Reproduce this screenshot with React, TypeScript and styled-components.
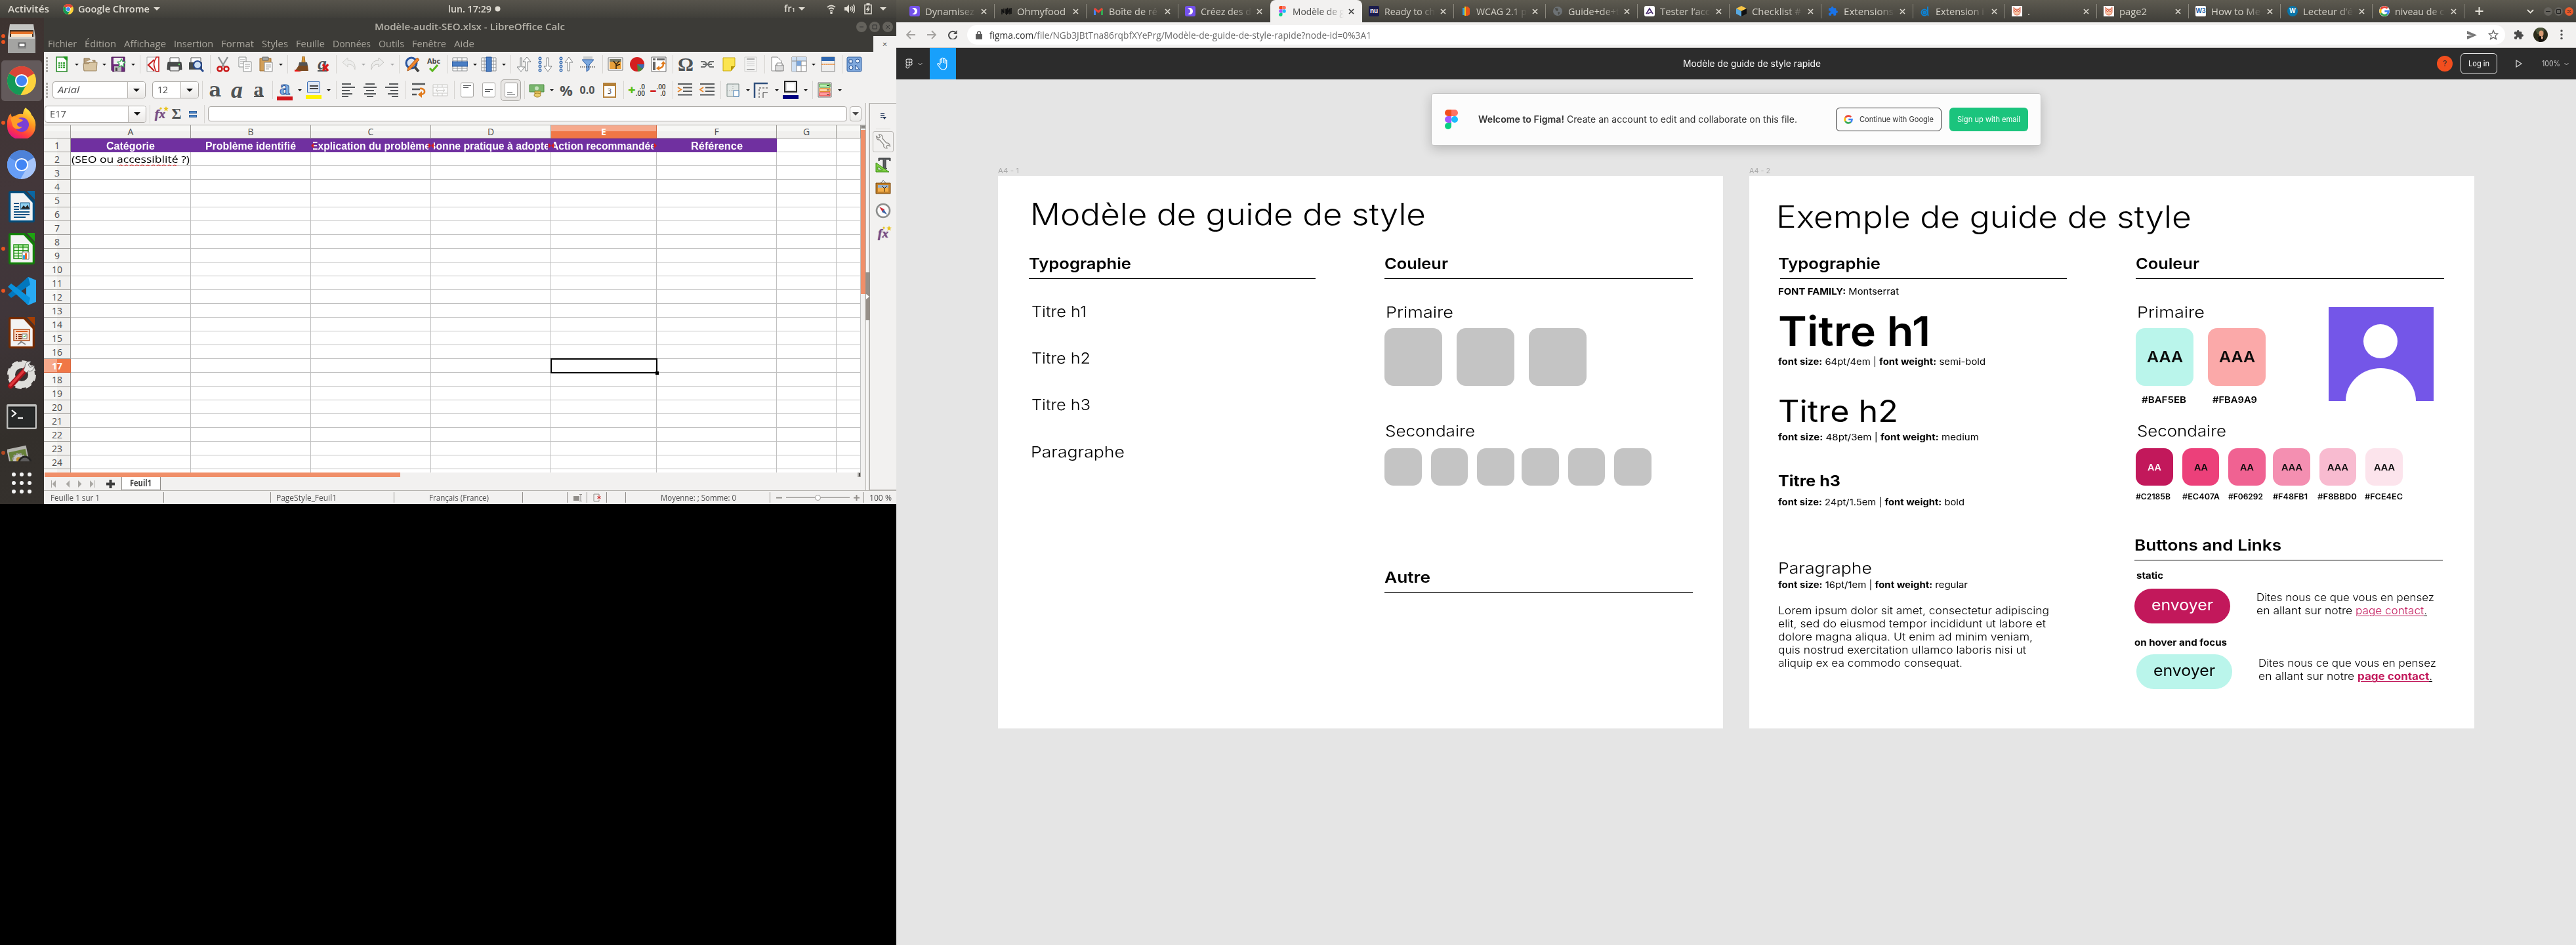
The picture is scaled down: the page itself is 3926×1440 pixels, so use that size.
import React, { useLayoutEffect, useRef, useState } from "react";
import styled, { createGlobalStyle, css } from "styled-components";

const ui = `"Open Sans", "Noto Sans", sans-serif`;
const geo = `Inter, "Open Sans", sans-serif`;

const Global = createGlobalStyle`
  *{box-sizing:border-box}
  html,body{margin:0;padding:0;background:#000}
  svg{display:block;flex:none}
`;

/* ---------- text fitted to a given measure ---------- */
const FitBox = styled.span<{ $w: number }>`
  display: inline-block; width: ${p => p.$w}px; white-space: nowrap; flex: none; vertical-align: top; text-align: left;
`;
const FitInner = styled.span`display: inline-block; transform-origin: 0 50%; white-space: pre;`;
function Fit({ w, children }: { w: number; children: React.ReactNode }) {
  const ref = useRef<HTMLSpanElement>(null);
  const [s, setS] = useState(1);
  useLayoutEffect(() => {
    const el = ref.current;
    if (el && el.offsetWidth) setS(w / el.getBoundingClientRect().width * s);
  }, [w]);
  return <FitBox $w={w}><FitInner ref={ref} style={{ transform: `scaleX(${s})` }}>{children}</FitInner></FitBox>;
}

const Screen = styled.div`display: flex; width: 3926px; height: 1440px; overflow: hidden; background: #000;`;

/* ================= left monitor ================= */
const Left = styled.div`width: 1366px; height: 768px; display: flex; flex-direction: column; flex: none; font-family: ${ui};`;
const TopBar = styled.div`
  height: 27px; display: flex; align-items: center; background: linear-gradient(#57544c, #403f3a);
  color: #dfdbd2; font-size: 14.5px; font-weight: 600; line-height: 27px; padding-left: 12px;
`;
const Gap = styled.div<{ $w: number }>`width: ${p => p.$w}px; flex: none;`;
const Grow = styled.div`flex: 1;`;
const Down = styled.i<{ $s?: number; $c?: string }>`
  width: 0; height: 0; flex: none; border: ${p => p.$s ?? 5}px solid transparent; border-bottom: 0; border-top-color: ${p => p.$c ?? "#dfdbd2"};
`;
const Body = styled.div`flex: 1; display: flex; min-height: 0;`;
const Dock = styled.div`
  width: 67px; flex: none; display: flex; flex-direction: column; overflow: hidden;
  background: linear-gradient(165deg, #3d3330 0%, #43373a 35%, #40363a 60%, #332f2b 85%, #35312d 100%);
`;
const DockSlot = styled.div<{ $h?: number }>`height: ${p => p.$h ?? 64}px; flex: none; display: flex; align-items: center; overflow: hidden;`;
const Dots = styled.div`width: 9px; padding-left: 2px; display: flex; flex-direction: column; gap: 3px; flex: none;`;
const RunDot = styled.i<{ $dim?: boolean }>`width: 6px; height: 6px; border-radius: 3px; background: #e95420; opacity: ${p => (p.$dim ? 0.7 : 1)};`;
const Tile = styled.div<{ $on?: boolean }>`
  width: 62px; height: 62px; margin-left: -7px; border-radius: 5px; display: flex; align-items: center; justify-content: center;
  background: ${p => (p.$on ? "#635a5b" : "transparent")};
`;

const Win = styled.div`flex: 1; display: flex; flex-direction: column; background: #f2f1f0; min-width: 0; color: #4c4c4c;`;
const TitleBar = styled.div`
  height: 28px; background: #3c3b37; display: flex; align-items: center; color: #b6b3aa; font-size: 14.5px; font-weight: 600; line-height: 28px; padding-left: 504px;
`;
const WBtn = styled.div<{ $hot?: boolean; $s?: number }>`
  width: ${p => p.$s ?? 16}px; height: ${p => p.$s ?? 16}px; border-radius: 50%; flex: none;
  background: ${p => (p.$hot ? "#ea5a2b" : "#64625c")}; display: flex; align-items: center; justify-content: center;
`;
const MenuBar = styled.div`
  height: 24px; background: #3c3b37; display: flex; align-items: center; gap: 12px; padding-left: 6px; color: #a9a69d; font-size: 14.5px; line-height: 24px;
`;
const CloseDoc = styled.div`
  width: 35px; height: 24px; margin-left: auto; background: #f2f1f0; color: #555; display: flex; align-items: center; justify-content: center; font-size: 13px;
`;
const ToolRow = styled.div<{ $h: number }>`height: ${p => p.$h}px; flex: none; display: flex; align-items: center;`;
const Item = styled.div<{ $ml: number; $w: number }>`
  margin-left: ${p => p.$ml}px; width: ${p => p.$w}px; flex: none; display: flex; align-items: center; justify-content: center;
`;
const SepLine = styled.i`width: 1px; height: 28px; background: #d6d4d1;`;
const Handle = styled.i`width: 3px; height: 23px; background: repeating-linear-gradient(#aaa8a4 0 3px, transparent 3px 5px);`;
const Combo = styled.div`
  width: 100%; height: 26px; border: 1px solid #a9a6a2; border-radius: 4px; display: flex; align-items: stretch; overflow: hidden;
  background: #fff; color: #4c4c4c; font-size: 14px; line-height: 24px; padding-left: 7px; justify-content: space-between;
`;
const ComboBtn = styled.div<{ $w?: number }>`
  width: ${p => p.$w ?? 27}px; border-left: 1px solid #b9b6b2; background: linear-gradient(#fff, #ebe9e7); display: flex; align-items: center; justify-content: center;
`;
const Glyph = styled.span<{ $i?: boolean; $u?: boolean; $size?: number; $f?: string }>`
  font-family: ${p => p.$f ?? `"Liberation Serif", serif`}; font-size: ${p => p.$size ?? 25}px; line-height: 24px; font-weight: 700; color: #4f5355; white-space: nowrap;
  font-style: ${p => (p.$i ? "italic" : "normal")};
  ${p => p.$u && css`border-bottom: 2px solid #4f5355; line-height: 18px; padding-bottom: 1px;`}
`;
const Pressed = styled.div`
  width: 31px; height: 33px; border: 1px solid #a5a29e; border-radius: 5px; background: #e9e7e5; display: flex; align-items: center; justify-content: center;
`;
const Main = styled.div`flex: 1; display: flex; min-height: 0;`;
const Work = styled.div`width: 1252px; flex: none; display: flex; flex-direction: column;`;
const FInput = styled.div`width: 100%; height: 23px; border: 1px solid #a9a6a2; border-radius: 4px; background: #fff;`;
const FDrop = styled.div`width: 100%; height: 23px; border: 1px solid #b5b2ae; border-radius: 4px; background: linear-gradient(#fff,#ececea); display: flex; align-items: center; justify-content: center;`;
const SheetArea = styled.div`height: 530px; flex: none; display: flex; border-top: 1px solid #b0aeaa; overflow: hidden;`;
const Sheet = styled.div`width: 1245px; height: 529px; flex: none; background: #fff; overflow: hidden;`;
const cols = [183, 183, 183, 183, 161, 183, 91, 37];
const GridRow = styled.div<{ $head?: boolean }>`
  display: grid; grid-template-columns: 41px ${cols.map(c => c + "px").join(" ")}; grid-template-rows: ${p => (p.$head ? 20 : 21)}px; height: ${p => (p.$head ? 20 : 21)}px;
`;
const ColHead = styled.div<{ $on?: boolean }>`
  border-right: 1px solid ${p => (p.$on ? "#d8663d" : "#9b9995")}; border-bottom: 1px solid ${p => (p.$on ? "#d8663d" : "#9b9995")};
  background: ${p => (p.$on ? "linear-gradient(#f6a98c 0 9px, #f07746 9px)" : "linear-gradient(#f7f7f5 0 9px, #f1f0ee 9px)")};
  color: ${p => (p.$on ? "#fff" : "#4c4c4c")}; font-weight: ${p => (p.$on ? 700 : 400)}; font-size: 14px; line-height: 19px; text-align: center;
`;
const RowHead = styled.div<{ $on?: boolean }>`
  border-right: 1px solid ${p => (p.$on ? "#d8663d" : "#9b9995")}; border-bottom: 1px solid ${p => (p.$on ? "#d8663d" : "#9b9995")};
  background: ${p => (p.$on ? "linear-gradient(90deg,#f6a98c 0 20px,#f07746 20px)" : "linear-gradient(90deg,#f7f7f5 0 20px,#f1f0ee 20px)")};
  color: ${p => (p.$on ? "#fff" : "#4c4c4c")}; font-weight: ${p => (p.$on ? 700 : 400)}; font-size: 14px; line-height: 21px; text-align: center;
`;
const Cell = styled.div<{ $fill?: boolean }>`
  position: relative; border-right: 1px solid ${p => (p.$fill ? "#7030a0" : "#c0c0c0")}; border-bottom: 1px solid ${p => (p.$fill ? "#7030a0" : "#c0c0c0")};
  background: ${p => (p.$fill ? "#7030a0" : "#fff")};
`;
const HeadText = styled.div<{ $inset?: number }>`
  margin: 0 ${p => p.$inset ?? 0}px; height: 21px; overflow: hidden; display: flex; justify-content: center; color: #fff;
  font: 700 16px/24px "Liberation Sans", Arial, sans-serif; white-space: nowrap;
`;
const CellText = styled.div`color: #000; font-size: 15px; line-height: 20px; padding-left: 1px; white-space: nowrap;`;
const Wavy = styled.span`text-decoration: underline wavy #e02020 1px; text-underline-offset: 2px;`;
const Selection = styled.div`position: absolute; inset: -1px -2px -2px -1px; border: 2px solid #000; z-index: 2;`;
const Knob = styled.i`position: absolute; right: -4px; bottom: -4px; width: 5px; height: 5px; background: #000;`;
const Clip = styled.i<{ $r?: boolean }>`
  position: absolute; top: 7px; ${p => (p.$r ? "right:-1px" : "left:0")}; width: 0; height: 0; border: 4px solid transparent;
  ${p => (p.$r ? "border-left-color:#d81e1e;border-right:0" : "border-right-color:#d81e1e;border-left:0")};
`;
const VScroll = styled.div`width: 7px; background: #f2f1f0; display: flex; flex-direction: column; gap: 2px;`;
const VCap = styled.i`height: 5px; border: solid #aaa8a4; border-width: 2px 1px; background: #111;`;
const VThumb = styled.i`height: 250px; background: #f08f69;`;
const HScroll = styled.div`height: 7px; flex: none; display: flex; justify-content: space-between; padding-left: 1px;`;
const HThumb = styled.i`width: 542px; background: #f08f69;`;
const HCap = styled.i`width: 5px; margin-right: 7px; background: #111; border: solid #aaa8a4; border-width: 1px 2px;`;
const TabsRow = styled.div`height: 20px; flex: none; display: flex; align-items: center; padding-left: 11px;`;
const SheetTab = styled.div`
  width: 60px; height: 20px; background: #fff; border: 1px solid #8f8c88; border-top: 0; color: #3c3c3c; font-weight: 700; font-size: 13.5px; line-height: 18px; padding-left: 12px;
`;
const Splitter = styled.div`width: 7px; border: solid #b5b3af; border-width: 0 1px; display: flex; flex-direction: column; background: #f6f5f4; border-right-width: 2px;`;
const SplitHandle = styled.div`margin: 258px -2px 0 -1px; height: 73px; background: #979089; display: flex; align-items: center; padding-left: 1px;`;
const TriR = styled.i`width: 0; height: 0; border: 4px solid transparent; border-left: 5px solid #fff; border-right: 0;`;
const Side = styled.div`flex: 1; border: solid #b5b3af; border-width: 1px 0; display: flex; flex-direction: column; align-items: center;`;
const SideBtn = styled.div<{ $mt?: number; $on?: boolean }>`
  width: 32px; height: 32px; margin-top: ${p => p.$mt ?? 0}px; display: flex; align-items: center; justify-content: center; flex: none;
  border: 1px solid ${p => (p.$on ? "#b9b7b4" : "transparent")}; border-radius: 3px;
`;
const SideRule = styled.i`width: 22px; height: 1px; margin: 3px 0; background: #dcdad7; flex: none;`;
const Status = styled.div`height: 21px; flex: none; border-top: 1px solid #b5b3af; display: flex; align-items: center; font-size: 13px; line-height: 20px; padding-left: 10px;`;
const StSep = styled.i`width: 1px; height: 16px; background: #918e8a; flex: none;`;
const Track = styled.div`width: 97px; height: 2px; background: #b0aeab; display: flex; align-items: center; justify-content: center;`;
const Thumb = styled.i`width: 9px; height: 9px; border-radius: 5px; background: #fff; border: 1px solid #9a9794;`;
const Sub = styled.small`font-size: 9px;`;

/* ---------- toolbar icons ---------- */
const G = "#55585a";
const icons: Record<string, React.ReactNode> = {
  newdoc: <><path d="M4 1h11l5 5v17H4z" fill="#fff" stroke="#2a8a2a" strokeWidth="1.6" /><path d="M14 0h7v7z" fill="#1f9a1f" /><path d="M7 9h10v9H7z" fill="#37a237" /><path d="M7 12h10M7 15h10M10.3 9v9M13.6 9v9" stroke="#fff" /></>,
  open: <><path d="M3 3h8l2 3h7v15H3z" fill="#b79f7c" stroke="#8d7652" /><path d="M6 8l8-3 3 3z" fill="#fff" /><path d="M2 11h8l2-2h11l-1 13H3z" fill="#d9c6a4" stroke="#9a835f" /></>,
  save: <><path d="M2 1h20v22H4l-2-2z" fill="#6d2a7b" stroke="#47184f" /><path d="M5 2h14v10H5z" fill="#f1f1f1" /><path d="M6 15h11v8H6z" fill="#bbb" /><path d="M8 17h3v5H8z" fill="#444" /><path d="M17 4l2 4 4 .5-3 3 .8 4.5-3.8-2-3.800 2 .8-4.500-3-3 4-.5z" fill="#fff" stroke="#3fae5a" strokeWidth="1.3" /></>,
  pdf: <><path d="M3 1h13l4 4v18H3z" fill="#f8f8f8" stroke="#aaa" /><path d="M17 1h4v22h-4C12 13 13 8 17 2z" fill="#fff" stroke="#c61d1d" strokeWidth="1.600" /><path d="M14 5L5 13l9 9" fill="none" stroke="#c61d1d" strokeWidth="2.200" /></>,
  print: <><path d="M5 2h14v8H5z" fill="#fff" stroke="#555" /><path d="M2 9h20l1 11H1z" fill="#484b4b" stroke="#2e3030" /><path d="M5 15h14v7H5z" fill="#e9e9e9" stroke="#444" /><circle cx="19" cy="12" r="1.200" fill="#6d6" /></>,
  preview: <><path d="M4 2h15v8H4z" fill="#fff" stroke="#555" /><path d="M1 9h20v11H1z" fill="#484b4b" /><circle cx="14" cy="13" r="6" fill="#cfe0f3" stroke="#26488c" strokeWidth="2.200" /><path d="M18 18l5 5" stroke="#26488c" strokeWidth="3" /></>,
  cut: <><path d="M5 1l9 15M19 1l-9 15" stroke="#8d9091" strokeWidth="2.400" /><circle cx="7" cy="19" r="3.500" fill="none" stroke="#c91a1a" strokeWidth="2.600" /><circle cx="17" cy="19" r="3.500" fill="none" stroke="#c91a1a" strokeWidth="2.600" /></>,
  copy: <><path d="M3 1h11v15H3z" fill="#fff" stroke="#8a8d8c" /><path d="M5 5h7M5 8h7M5 11h5" stroke="#999" /><path d="M10 8h12v15H10z" fill="#fff" stroke="#8a8d8c" /><path d="M12 12h8M12 15h8M12 18h6" stroke="#999" /></>,
  paste: <><path d="M2 3h17v19H2z" fill="#d2a05b" stroke="#99692a" /><path d="M6 1h9v5H6z" fill="#a3a6a5" stroke="#666" /><path d="M9 9h12v14H9z" fill="#fff" stroke="#888" /><path d="M11 13h8M11 16h8M11 19h5" stroke="#999" /></>,
  brush: <><path d="M13 0h3l1 9h-5z" fill="#e09d3c" stroke="#94601a" /><path d="M8 9h12l1 5H7z" fill="#555" /><path d="M7 14h14l1 8H9L1 23z" fill="#7b4a21" /><path d="M1 20l11 3H1z" fill="#e11" /></>,
  undo: <path d="M2 9l8-7v4c8 0 12 5 11 14-2-6-5-8-11-8v4z" fill="#ededec" stroke="#cfcecb" />,
  redo: <path d="M22 9l-8-7v4C6 6 2 11 3 20c2-6 5-8 11-8v4z" fill="#ededec" stroke="#c4c3c0" />,
  find: <><circle cx="11" cy="10" r="8" fill="#dbe6f5" stroke="#29549d" strokeWidth="3" /><path d="M16 16l6 7" stroke="#444" strokeWidth="4" /><path d="M20 2l3 3L9 20l-4 2 1-5z" fill="#f2862d" stroke="#a5500b" /></>,
  rows: <><path d="M1 2h22v20H1z" fill="#fff" stroke="#8b8e90" /><path d="M8 2v20M15 2v20M1 6h22M1 18h22" stroke="#8b8e90" /><path d="M0 8h24v7H0z" fill="#4b7fc4" stroke="#1f4d90" /></>,
  cols: <><path d="M1 2h22v20H1z" fill="#fff" stroke="#8b8e90" /><path d="M1 7h22M1 12h22M1 17h22M5 2v20M19 2v20" stroke="#8b8e90" /><path d="M8 1h8v22H8z" fill="#4b7fc4" stroke="#1f4d90" /></>,
  sort: <g fill="#fff" stroke="#7d8081"><path d="M7 2v14H2l6 7 6-7H9V2z" /><path d="M15 22V8h-4l6-7 6 7h-5v14z" /></g>,
  asc: <><g fill="none" stroke="#2f67b0" strokeWidth="1.400"><circle cx="4" cy="3" r="1.800" /><circle cx="4" cy="9" r="1.800" /><circle cx="4" cy="15" r="1.800" /><circle cx="4" cy="21" r="1.800" /></g><path d="M14 2v13H10l6 8 6-8h-5V2z" fill="#fff" stroke="#7d8081" /></>,
  desc: <><g fill="none" stroke="#2f67b0" strokeWidth="1.400"><circle cx="4" cy="3" r="1.800" /><circle cx="4" cy="9" r="1.800" /><circle cx="4" cy="15" r="1.800" /><circle cx="4" cy="21" r="1.800" /></g><path d="M14 22V9h-4l6-8 6 8h-5v13z" fill="#fff" stroke="#7d8081" /></>,
  filter: <><path d="M5 0h14v5H5z" fill="#c9cccd" /><path d="M3 5h18l-7 8v7l-4 3V13z" fill="#7aa7de" stroke="#2a5ba3" /><path d="M0 16h24" stroke="#333" strokeDasharray="2 1" /></>,
  image: <><path d="M1 2h22v19H1z" fill="#fff" stroke="#777" /><path d="M3 4h18v15H3z" fill="#e8a13c" /><path d="M3 4h18v4H3z" fill="#7b7d6b" /><path d="M13 19V12L9 7M13 12l5-5M13 14l6-2" stroke="#2b1c08" strokeWidth="1.500" fill="none" /></>,
  chart: <><circle cx="12" cy="12" r="11" fill="#d42020" /><path d="M12 12L22 17A11 11 0 0 1 13 23z" fill="#4a8a3a" /><path d="M12 12L23 12A11 11 0 0 1 20 19z" fill="#3a6cb4" /></>,
  pivot: <><path d="M1 1h22v22H1z" fill="#fff" stroke="#666" /><path d="M3 3h4v3H3zM9 3h12v3H9zM3 8h4v13H3z" fill="#666" /><path d="M11 18c6 0 8-3 8-7" stroke="#e07a1c" strokeWidth="2.500" fill="none" /><path d="M15 12l4-5 4 5zM13 14v8l-5-4z" fill="#e07a1c" /></>,
  link: <g fill="none" stroke="#6b6e6e" strokeWidth="2"><path d="M2 8h6l3 3M22 8h-6l-3 3M2 16h6l3-3M22 16h-6l-3-3M5 12h14" /></g>,
  note: <><path d="M3 2h18v13l-6 7H3z" fill="#fbe44f" stroke="#c8a80e" /><path d="M21 15h-6v7z" fill="#b5960a" /></>,
  hdr: <><path d="M3 1h18v22H3z" fill="#f4f4f3" stroke="#cfcecc" /><path d="M6 4h12M6 20h12" stroke="#aaa" strokeWidth="2" /><path d="M6 8h12M6 11h12M6 14h12" stroke="#ccc" /></>,
  parea: <><path d="M3 1h9l6 6v15H3z" fill="#fff" stroke="#888" /><path d="M9 13h12v9H9z" fill="#ddd" stroke="#777" /><path d="M11 10h8v4h-8z" fill="#fff" stroke="#888" /></>,
  freeze: <><path d="M1 1h22v22H1z" fill="#fff" stroke="#777" /><path d="M1 1h22v6H1zM1 1h7v22H1z" fill="#cfe0f3" /><path d="M8 1v22M15 7v16M1 7h22M8 14h15" stroke="#888" /><path d="M8 7h7v7H8z" fill="#7aa5da" /></>,
  split: <><path d="M2 1h20v22H2z" fill="#eee" stroke="#888" /><path d="M2 1h20v6H2z" fill="#2f67b0" /><path d="M2 12h20" stroke="#e8791a" strokeWidth="1.600" strokeDasharray="2 1" /></>,
  shapes: <><rect x="1" y="1" width="22" height="22" rx="2" fill="#7fa8dc" stroke="#2f5f9f" /><g fill="#e8f0fa" stroke="#1f4d90"><path d="M4 5h5v5H4z" /><circle cx="17" cy="7" r="3" /><circle cx="7" cy="17" r="3" /><path d="M14 13v7h6z" /></g></>,
  left: <path d="M2 3h14M2 8h20M2 13h12M2 18h16M2 22h10" stroke={G} strokeWidth="2.200" />,
  center: <path d="M5 3h14M2 8h20M6 13h12M3 18h18M7 22h10" stroke={G} strokeWidth="2.200" />,
  right: <path d="M8 3h14M2 8h20M10 13h12M6 18h16M12 22h10" stroke={G} strokeWidth="2.200" />,
  wrap: <><path d="M2 3h20M2 11h12M2 19h7" stroke={G} strokeWidth="2.400" /><path d="M14 10c8-1 10 8 2 9" stroke="#e07a1c" strokeWidth="2.600" fill="none" /><path d="M17 14v10l-6-5z" fill="#e07a1c" /></>,
  merge: <g stroke="#c9c8c5" fill="#fafafa"><path d="M1 4h22v17H1z" /><path d="M8 4v4M15 4v4M1 8h22M1 17h22M8 17v4M15 17v4M6 12.500h12M8 10l-3 2.500 3 2.500M16 10l3 2.500-3 2.500" /></g>,
  vtop: <><rect x="2.500" y="1" width="19" height="22" rx="2" fill="#fff" stroke="#a9a7a4" /><path d="M6 5.500h12M6 8.500h8" stroke={G} /></>,
  vmid: <><rect x="2.500" y="1" width="19" height="22" rx="2" fill="#fff" stroke="#a9a7a4" /><path d="M6 11.500h12M6 14.500h8" stroke={G} /></>,
  vbot: <><rect x="2.500" y="1" width="19" height="22" rx="2" fill="#fff" stroke="#a9a7a4" /><path d="M6 15.500h8M6 18.500h12" stroke={G} /></>,
  money: <><path d="M1 4h22v11H1z" fill="#79b56d" stroke="#4a8a3f" /><circle cx="12" cy="9.500" r="3" fill="#c6e2be" /><path d="M9 14h9v4H9z" fill="#e3c25b" stroke="#a3822a" /><ellipse cx="13" cy="20" rx="5" ry="3" fill="#e9cc6a" stroke="#a3822a" /></>,
  indent: <><path d="M1 3h22M9 8.500h14M9 14h14M1 19.500h22" stroke={G} strokeWidth="2.200" /><path d="M1 8l5 3.500L1 15" stroke="#e8892f" fill="none" strokeWidth="2" /></>,
  outdent: <><path d="M1 3h22M9 8.500h14M9 14h14M1 19.500h22" stroke={G} strokeWidth="2.200" /><path d="M6 8l-5 3.500L6 15" stroke="#e8892f" fill="none" strokeWidth="2" /></>,
  borders: <><path d="M3 3h18v19H3z" fill="#e3e8e6" stroke="#7d8a87" /><path d="M12 3v10M3 13h9" stroke="#999" strokeDasharray="1 2" /><path d="M13 13h8v9h-8z" fill="#fff" stroke="#3a76b0" /></>,
  bstyle: <><path d="M2 24V2h20" stroke="#31517d" strokeWidth="2.500" fill="none" /><path d="M9 24V9h14" stroke="#333" strokeDasharray="3 2" fill="none" /><path d="M15 24v-8h7" stroke="#333" fill="none" /></>,
  cond: <><path d="M2 1h20v22H2z" fill="#ddd" stroke="#777" /><path d="M4 3h16v5H4z" fill="#bdf0b5" stroke="#3c9a2e" /><path d="M4 9.500h16v5H4z" fill="#fbd4a6" stroke="#e08a2a" /><path d="M4 16h16v5H4z" fill="#ff9d9d" stroke="#e33" /><path d="M15 5.500h4M15 12h4M15 18.500h4" stroke="#222" /></>,
  wrench: <path d="M1.500 3.500l3.500 3 2.500-2L5.500 1c4-.5 6 2 5 5.500l6.500 7.500c3-.5 5.500 1.500 5.500 5l-3-2-2.500 1.500 1 3.500c-4 0-6-2-5-5.500L6.500 9C3.500 9.500 1.500 7 1.500 3.500z" fill="#f7f7f6" stroke="#8b8985" strokeWidth="1.200" />,
  tee: <><path d="M5 1h18v4h-1l-1-2h-5v13l2 1h-7l1-1V3H7L6 5H5z" fill="#5b5e60" stroke="#3b3d3e" /><path d="M1 8l20 14H1z" fill="#7fcf45" stroke="#3a8a12" /><path d="M4 14l7 5H4z" fill="#f2f1f0" stroke="#3a8a12" /></>,
  gallery: <><path d="M8 6l4-4 4 4" stroke="#555" fill="none" /><path d="M1 6h22v16H1z" fill="#c1802b" stroke="#7a4708" /><path d="M4 9h16v10H4z" fill="#f3ae49" /><path d="M4 9h16v4H4z" fill="#98b2cf" /><path d="M14 19v-5l-4-4M14 14l4-4" stroke="#2b1c08" fill="none" /></>,
  compass: <><circle cx="12" cy="12" r="10" fill="#fbfbfb" stroke="#8b8d8c" strokeWidth="2.600" /><path d="M6 6l8 4-3 4z" fill="#d12b35" /><path d="M18 18l-8-4 3-4z" fill="#3d63a5" /></>,
};
const Ic = ({ n, s = 24 }: { n: string; s?: number }) => <svg width={s} height={s} viewBox="0 0 24 24" fill="none">{icons[n]}</svg>;

const ColorBar = styled.div`display: flex; flex-direction: column; align-items: center;`;
const Swab = styled.i<{ $c: string }>`width: 24px; height: 6px; background: ${p => p.$c};`;
const BlueA = styled.span`
  height: 25px; font: 700 32px/22px "Liberation Serif", serif; color: #7fabe0; -webkit-text-stroke: 1px #2a5a9e;
`;
const Boxed = styled.i`width: 20px; height: 18px; margin: 0 0 4px; border: 2px solid #222; background: #fff; box-shadow: inset 0 0 0 2px #ddd;`;
const HiBox = styled.div`width: 20px; height: 18px; border: 1px solid #3b6db4; background: #dfe8f5; margin-bottom: 3px; border-radius: 2px; display: flex; flex-direction: column; gap: 2px; justify-content: center; align-items: center; i{width:13px;height:2px;background:#444}`;
const AbcBox = styled.div`display: flex; flex-direction: column; align-items: center; font-weight: 700; font-size: 11px; line-height: 11px; color: #444;`;
const Stack2 = styled.div`display: flex; align-items: center; font-size: 10px; line-height: 10px; color: #333; white-space: pre; font-weight: 600; text-align: right;`;
const PlusMark = styled.span<{ $m?: boolean }>`font: 900 20px/14px ${ui}; color: ${p => (p.$m ? "#d01c1c" : "#5bbf14")};`;
const Cal = styled.div`width: 20px; height: 23px; border: 2px solid #b5813a; background: #fff; border-top-width: 5px; font-size: 11px; line-height: 15px; text-align: center; color: #444;`;
const FxText = styled.span`font: italic 700 19px/22px "Liberation Serif", serif; color: #7a4c86; text-shadow: 0 0 1px #4d2a59; position: relative;`;
const StarMark = styled.svg`position: absolute; right: -5px; top: -1px;`;
const EqMark = styled.div`width: 12px; display: flex; flex-direction: column; gap: 2px; i{height:4px;background:#4b86c8;border:1px solid #2b5b96}`;
const ClearX = styled.svg`margin: 10px 0 0 -8px;`;
const Fx = () => (
  <FxText>fx<StarMark width="16" height="8" viewBox="0 0 16 8"><path d="M12 0l1.200 2.600 2.800.2-2.200 1.800.8 2.800L12 6 9.400 7.400l.8-2.800L8 2.800l2.800-.2zM4 1l1 1.500 1.500.5-1.500 1-1 1.500-1-1.500L1.500 3 3 2.500z" fill="#e8c21c" /></StarMark></FxText>
);

type Tool = [number, React.ReactNode, number?];
function Tools({ items, origin = 67 }: { items: Tool[]; origin?: number }) {
  let x = origin;
  return <>{items.map(([c, node, w = 24], i) => {
    const ml = c - w / 2 - x;
    x = c + w / 2;
    return <Item key={i} $ml={ml} $w={w}>{node}</Item>;
  })}</>;
}
const sep = (x: number): Tool => [x, <SepLine />, 1];
const dn = (x: number, c = "#111"): Tool => [x, <Down $s={3} $c={c} />, 6];
const ic = (x: number, n: string): Tool => [x, <Ic n={n} />];

const row1: Tool[] = [
  [71.5, <Handle />, 3], ic(94, "newdoc"), dn(116.5), ic(137, "open"), dn(158.5), ic(180, "save"), dn(202.5), sep(213),
  ic(233, "pdf"), ic(266, "print"), ic(299, "preview"), sep(320), ic(340, "cut"), ic(373, "copy"), ic(406, "paste"), dn(427.5), sep(438),
  ic(460, "brush"), [493, <><Glyph $i $u $size={27}>a</Glyph><ClearX width="12" height="14"><path d="M2 2l8 10M10 2L2 12" stroke="#d61c1c" strokeWidth="3.500" /></ClearX></>], sep(512), ic(532, "undo"), dn(553.5, "#aaa"), ic(575, "redo"), dn(597.5, "#aaa"), sep(608),
  ic(628, "find"), [661, <AbcBox>Abc<svg width="16" height="12" viewBox="0 0 16 12"><path d="M2 6l4 4 8-9" stroke="#59b51c" strokeWidth="3" fill="none" /></svg></AbcBox>], sep(682),
  ic(701, "rows"), dn(723.5), ic(745, "cols"), dn(767.5), sep(778), ic(798, "sort"), ic(831, "asc"), ic(863, "desc"), ic(896, "filter"), sep(918),
  ic(938, "image"), ic(971, "chart"), ic(1004, "pivot"), sep(1025), [1045, <Glyph $size={30}>Ω</Glyph>], ic(1078, "link"), ic(1111, "note"), ic(1144, "hdr"), sep(1165),
  ic(1185, "parea"), ic(1218, "freeze"), dn(1239.5), ic(1262, "split"), sep(1283), ic(1302, "shapes"),
];
const row2: Tool[] = [
  [71.5, <Handle />, 3],
  [151, <Combo><i><Fit w={33}>Arial</Fit></i><ComboBtn><Down $s={5} $c="#111" /></ComboBtn></Combo>, 142],
  [267.5, <Combo><Fit w={16}>12</Fit><ComboBtn><Down $s={5} $c="#111" /></ComboBtn></Combo>, 71], sep(308),
  [328, <Glyph $size={29} $f={`"DejaVu Serif", serif`}>a</Glyph>], [361, <Glyph $i $size={36}>a</Glyph>], [394, <Glyph $u $size={30}>a</Glyph>], sep(415),
  [434, <ColorBar><BlueA>a</BlueA><Swab $c="#d0151b" /></ColorBar>], dn(456.5),
  [478, <ColorBar><HiBox><i /><i /></HiBox><Swab $c="#fff200" /></ColorBar>], dn(500.5), sep(512),
  ic(531, "left"), ic(564, "center"), ic(597, "right"), sep(618), ic(638, "wrap"), ic(671, "merge"), sep(692),
  ic(712, "vtop"), ic(745, "vmid"), [778.5, <Pressed><Ic n="vbot" /></Pressed>, 31], sep(799), ic(818, "money"), dn(840.5),
  [863, <Glyph $f={ui} $size={22}>%</Glyph>], [895, <Glyph $f={ui} $size={16}>0.0</Glyph>], [929, <Cal>3</Cal>], sep(950.5),
  [970, <Stack2><PlusMark>+</PlusMark><span>{".0\n.00"}</span></Stack2>], [1002.5, <Stack2><PlusMark $m>–</PlusMark><span>{".00\n.0"}</span></Stack2>], sep(1025),
  ic(1044, "indent"), ic(1078, "outdent"), sep(1098), ic(1117, "borders"), dn(1139.5), ic(1160, "bstyle"), dn(1183.5),
  [1205, <ColorBar><Boxed /><Swab $c="#000080" /></ColorBar>], dn(1227.5), sep(1238), ic(1257, "cond"), dn(1279.5),
];
const row3: Tool[] = [
  [145.5, <Combo><Fit w={25}>E17</Fit><ComboBtn><Down $s={5} $c="#111" /></ComboBtn></Combo>, 155], sep(228.5),
  [244, <Fx />], [269, <Glyph $size={23}>Σ</Glyph>], [294, <EqMark><i /><i /></EqMark>], sep(311.5),
  [803.5, <FInput />, 974], [1304, <FDrop><Down $s={5} $c="#444" /></FDrop>, 18],
];

/* ---------- dock icons ---------- */
const Chrome = ({ s, blue }: { s: number; blue?: boolean }) => (
  <svg width={s} height={s} viewBox="0 0 48 48">
    <circle cx="24" cy="24" r="24" fill={blue ? "#a6c5fa" : "#fdd33c"} />
    <path d="M24 24L3.200 12A24 24 0 0 1 44.800 12z" fill={blue ? "#4d82d8" : "#dc4437"} />
    <path d="M24 0A24 24 0 0 1 44.800 13H24z" fill={blue ? "#4d82d8" : "#dc4437"} />
    <path d="M3.200 12A24 24 0 0 0 22 48L33 29 24 24z" fill={blue ? "#669df6" : "#159957"} />
    <circle cx="24" cy="24" r="11" fill="#fff" /><circle cx="24" cy="24" r="8.800" fill="#4285f4" />
  </svg>
);
const DocIcon = ({ c, d, children }: { c: string; d: string; children: React.ReactNode }) => (
  <svg width="40" height="48" viewBox="0 0 40 48"><path d="M3 0h22l15 15v30q0 3-3 3H3q-3 0-3-3V3q0-3 3-3z" fill={d} /><path d="M28 0h12v13z" fill={c} /><path d="M3 3h20l14 15v27H3z" fill="#f3f3f3" stroke={c} strokeWidth=".6" />{children}</svg>
);
const files = <svg width="42" height="44" viewBox="0 0 42 44"><path d="M3 0h36l3 20H0z" fill="#c4c4c2" /><path d="M3 9h36v14H3z" fill="#3a2a20" /><path d="M4 11h34v4H4z" fill="#e8742a" /><path d="M5 15h32v6H5z" fill="#fbe3c6" /><path d="M0 19h42v25H0z" fill="#a4a4a2" /><path d="M1 19h40v3H1z" fill="#d0d0ce" /><path d="M15 27h13v10H15z" fill="#888" /><path d="M17 29h9v5h-9z" fill="#fff" stroke="#444" /></svg>;
const firefox = <svg width="44" height="47" viewBox="0 0 44 47"><defs><linearGradient id="ff" x1=".8" y1="0" x2=".3" y2="1"><stop offset="0" stopColor="#fff14a" /><stop offset=".4" stopColor="#ff9a1f" /><stop offset=".75" stopColor="#ff3b3f" /><stop offset="1" stopColor="#e3108a" /></linearGradient></defs><path d="M28 0c3 3 8 6 9 11 5 5 7 12 6 18a21.500 20 0 0 1-43 0C-1 20 1 14 5 9l2 5 6-2c4-3 10-2 11-2 0-4 2-8 4-10z" fill="url(#ff)" /><circle cx="22" cy="26" r="11" fill="#7b3fd6" /><path d="M5 16c5-3 9-2 12 0l7 3c-3 4-7 3-9 6 0 3 3 5 8 4-5 6-13 4-15-2z" fill="#ff9d28" /></svg>;
const vscode = <svg width="43" height="43" viewBox="0 0 43 43"><path d="M31 0l12 5v33l-12 5-3-3V3z" fill="#29aaf3" /><path d="M31 0L0 27l5 5L34 12z" fill="#0277bd" /><path d="M0 15l5-5 29 22-3 11z" fill="#0a91dc" /></svg>;
const settings = <svg width="44" height="44" viewBox="0 0 44 44"><circle cx="22" cy="22" r="15" fill="none" stroke="#deddda" strokeWidth="10" /><circle cx="22" cy="22" r="19.500" fill="none" stroke="#deddda" strokeWidth="5" strokeDasharray="9 6.300" /><path d="M5 39L29 13" stroke="#a3121a" strokeWidth="8" strokeLinecap="round" /><path d="M5 38L28 13" stroke="#e0363b" strokeWidth="4" strokeLinecap="round" /><path d="M27 10c0-6 4-9 9-8l-4 5 3 4 6-3c1 6-4 10-9 8l-3 3-4-4z" fill="#e8e8e6" stroke="#777" /></svg>;
const terminal = <svg width="46" height="38" viewBox="0 0 46 38"><rect width="46" height="38" rx="2" fill="#bdbdbb" /><rect x="3" y="4" width="40" height="31" fill="#262828" stroke="#111" /><path d="M8 9l6 5-6 5M17 21h8" stroke="#fff" strokeWidth="2.200" fill="none" /></svg>;
const viewer = <svg width="38" height="34" viewBox="0 0 38 34"><g transform="rotate(-12 15 20)"><path d="M2 5h30v32H2z" fill="#c9c9c4" /><path d="M4 10h26v27H4z" fill="#6f8f3c" /><circle cx="17" cy="24" r="9" fill="#ddd" strokeDasharray="3 2" stroke="#aaa" strokeWidth="3" /><circle cx="17" cy="24" r="4" fill="#d49a2c" /></g><circle cx="27" cy="28" r="9" fill="#666" stroke="#222" strokeWidth="3" /></svg>;
const appgrid = <svg width="32" height="32" viewBox="0 0 32 32" fill="#f3f3f3">{[3, 16, 29].map(y => [4, 16, 28].map(x => <circle key={x + "-" + y} cx={x} cy={y} r="3" />))}</svg>;
const writer = <DocIcon c="#0a67a3" d="#064a76"><path d="M8 19h8M8 24h8M8 28h8M8 32h24M8 36h24M8 40h18" stroke="#0a5184" strokeWidth="2" /><path d="M18 18h14v10H18z" fill="#8fd0f0" stroke="#0a5184" /><path d="M19 27l4-5 3 3 3-4 3 6z" fill="#222" /></DocIcon>;
const calc = <DocIcon c="#1ea411" d="#137a0b"><path d="M8 18h22v21H8z" fill="#e4f7dd" stroke="#158a0b" strokeWidth="1.500" /><path d="M8 18h22v4H8z" fill="#8fdb80" /><path d="M8 22h22M8 26.500h22M8 31h22M8 35h22M15 18v21M22 18v21" stroke="#158a0b" strokeWidth="1.200" /><path d="M21 29h10v11H21z" fill="#fff" stroke="#777" /><path d="M22 34h3v6h-3z" fill="#27a5e8" /><path d="M25 31h3v9h-3z" fill="#e8672a" /></DocIcon>;
const impress = <DocIcon c="#a33e03" d="#6e2a04"><path d="M8 19h24v17H8z" fill="#f9d9c4" stroke="#b04e1a" strokeWidth="1.500" /><path d="M11 22h18" stroke="#d9601f" strokeWidth="2" /><path d="M11 27h2M15 27h5M11 30h2M15 30h5M11 33h2M15 33h5" stroke="#8a3208" strokeWidth="2" /><path d="M21 26h7v7h-7z" fill="#fff" stroke="#777" /><path d="M22 31l2-2 1 1 2-3" stroke="#3a3" fill="none" /><path d="M20 36v2l-6 4M20 38l6 4" stroke="#888" strokeWidth="2" /></DocIcon>;

const dock: { icon: React.ReactNode; dots?: number; on?: boolean }[] = [
  { icon: files, dots: 2 }, { icon: <Chrome s={44} />, dots: 1, on: true }, { icon: firefox, dots: 1 }, { icon: <Chrome s={44} blue /> },
  { icon: writer }, { icon: calc, dots: 1 }, { icon: vscode, dots: 1 }, { icon: impress }, { icon: settings }, { icon: terminal },
];
const ViewerWrap = styled.div`height: 26px; overflow: hidden; margin-left: 2px; opacity: .85;`;
const GridWrap = styled.div`padding-left: 17px;`;

const heads: [string, number, number?][] = [["Catégorie", 74], ["Problème identifié", 138], ["Explication du problème", 182, 3], ["Bonne pratique à adopter", 191, 4], ["Action recommandée", 160, 4], ["Référence", 79]];
const menus: [string, number][] = [["Fichier", 44], ["Édition", 48], ["Affichage", 64], ["Insertion", 60], ["Format", 50], ["Styles", 40], ["Feuille", 44], ["Données", 58], ["Outils", 39], ["Fenêtre", 52], ["Aide", 31]];

const Nav = ({ flip, bar }: { flip?: boolean; bar?: boolean }) => (
  <svg width="8" height="11" viewBox="0 0 8 11" fill="#aaa8a4"><g transform={flip ? "translate(8 0) scale(-1 1)" : undefined}><path d="M7 0v11L1.500 5.500z" />{bar && <path d="M0 0h1v11H0z" />}</g></svg>
);

function LeftScreen() {
  return (
    <Left>
      <TopBar>
        <Fit w={63}>Activités</Fit><Gap $w={21} /><Chrome s={16} /><Gap $w={7} /><Fit w={109}>Google Chrome</Fit><Gap $w={6} /><Down />
        <Gap $w={439} /><Fit w={66}>lun. 17:29</Fit><Gap $w={5} />
        <svg width="9" height="9"><circle cx="4.500" cy="4.500" r="4" fill="#dfdbd2" /></svg>
        <Gap $w={432} /><Fit w={17}>fr<Sub>1</Sub></Fit><Gap $w={5} /><Down /><Gap $w={33} />
        <svg width="14" height="14" viewBox="0 0 14 14" fill="none" stroke="#dfdbd2" strokeWidth="1.700"><path d="M1 4q6-5 12 0M3 7q4-3.500 8 0M5 10q2-1.500 4 0" /><circle cx="7" cy="12.500" r="1" fill="#dfdbd2" /></svg>
        <Gap $w={13} />
        <svg width="16" height="15" viewBox="0 0 16 15" fill="none" stroke="#dfdbd2" strokeWidth="1.500"><path d="M0 5h3l4-4v13l-4-4H0z" fill="#dfdbd2" stroke="none" /><path d="M9 5q2 2.500 0 5M11 3q4 4.500 0 9M13.500 1q4.500 6.500 0 13" /></svg>
        <Gap $w={14} />
        <svg width="12" height="17" viewBox="0 0 12 17"><path d="M1 2.500h10v13.500H1z" fill="none" stroke="#dfdbd2" strokeWidth="1.600" /><path d="M3.500 0h5v2h-5z" fill="#dfdbd2" /><path d="M7 4L3 10h2.500L5 14l4-6H6.500z" fill="#dfdbd2" /></svg>
        <Gap $w={12} /><Down />
      </TopBar>
      <Body>
        <Dock>
          {dock.map((d, i) => (
            <DockSlot key={i}><Dots>{Array.from({ length: d.dots ?? 0 }, (_, k) => <RunDot key={k} />)}</Dots><Tile $on={d.on}>{d.icon}</Tile></DockSlot>
          ))}
          <DockSlot $h={46}><Dots><RunDot $dim /></Dots><ViewerWrap>{viewer}</ViewerWrap></DockSlot>
          <DockSlot $h={46}><GridWrap>{appgrid}</GridWrap></DockSlot>
        </Dock>
        <Win>
          <TitleBar>
            <Fit w={290}>Modèle-audit-SEO.xlsx - LibreOffice Calc</Fit><Gap $w={444} />
            <WBtn><svg width="8" height="8"><path d="M1 4h6" stroke="#333" /></svg></WBtn><Gap $w={4} />
            <WBtn><svg width="8" height="8"><path d="M1 1h6v6H1z" stroke="#333" fill="none" /></svg></WBtn><Gap $w={4} />
            <WBtn><svg width="8" height="8"><path d="M1 1l6 6M7 1L1 7" stroke="#333" /></svg></WBtn>
          </TitleBar>
          <MenuBar>{menus.map(([m, w]) => <Fit key={m} w={w}>{m}</Fit>)}<CloseDoc>×</CloseDoc></MenuBar>
          <ToolRow $h={38}><Tools items={row1} /></ToolRow>
          <ToolRow $h={40}><Tools items={row2} /></ToolRow>
          <Main>
            <Work>
              <ToolRow $h={33}><Tools items={row3} /></ToolRow>
              <SheetArea>
                <Sheet>
                  <GridRow $head><ColHead />{["A", "B", "C", "D", "E", "F", "G", ""].map((c, i) => <ColHead key={i} $on={c === "E"}>{c}</ColHead>)}</GridRow>
                  {Array.from({ length: 25 }, (_, r) => (
                    <GridRow key={r}>
                      <RowHead $on={r === 16}>{r + 1}</RowHead>
                      {cols.map((_, c) => (
                        <Cell key={c} $fill={r === 0 && c < 6}>
                          {r === 0 && c < 6 && <HeadText $inset={heads[c][2]}><Fit w={heads[c][1]}>{heads[c][0]}</Fit></HeadText>}
                          {r === 0 && (c > 1 && c < 5) && <><Clip /><Clip $r /></>}
                          {r === 1 && c === 0 && <CellText><Fit w={180}>(SEO ou <Wavy>accessiblité</Wavy> ?)</Fit></CellText>}
                          {r === 16 && c === 4 && <Selection><Knob /></Selection>}
                        </Cell>
                      ))}
                    </GridRow>
                  ))}
                </Sheet>
                <VScroll><VCap /><VThumb /></VScroll>
              </SheetArea>
              <HScroll><HThumb /><HCap /></HScroll>
              <TabsRow>
                <Nav bar /><Gap $w={13} /><Nav /><Gap $w={11} /><Nav flip /><Gap $w={10} /><Nav flip bar /><Gap $w={18} />
                <svg width="13" height="13"><path d="M6.500 0v13M0 6.500h13" stroke="#3c3c3c" strokeWidth="4" /></svg><Gap $w={10} />
                <SheetTab><Fit w={33}>Feuil1</Fit></SheetTab>
              </TabsRow>
            </Work>
            <Splitter><SplitHandle><TriR /></SplitHandle></Splitter>
            <Side>
              <SideBtn $mt={3}><svg width="10" height="10"><path d="M1 1h6M1 4h6M1 7h3" stroke="#25395c" strokeWidth="1.400" /><path d="M4 6h6l-3 4z" fill="#25395c" /></svg></SideBtn>
              <SideRule />
              <SideBtn $on><Ic n="wrench" /></SideBtn>
              <SideBtn $mt={4}><Ic n="tee" /></SideBtn>
              <SideBtn $mt={1}><Ic n="gallery" /></SideBtn>
              <SideBtn $mt={4}><Ic n="compass" /></SideBtn>
              <SideBtn $mt={3}><Fx /></SideBtn>
            </Side>
          </Main>
          <Status>
            <Fit w={75}>Feuille 1 sur 1</Fit><Gap $w={97} /><StSep /><Gap $w={162} /><StSep /><Gap $w={8} /><Fit w={92}>PageStyle_Feuil1</Fit><Gap $w={87} /><StSep />
            <Gap $w={53} /><Fit w={91}>Français (France)</Fit><Gap $w={51} /><StSep /><Gap $w={67} /><StSep /><Gap $w={9} />
            <svg width="13" height="11"><path d="M0 3h9v7H0z" fill="#8f8c88" /><path d="M9 .5h4M9 10.500h4M11 0v11" stroke="#8f8c88" /></svg><Gap $w={7} /><StSep /><Gap $w={9} />
            <svg width="13" height="13"><path d="M9 3V1H1v11h8v-2" stroke="#8f8c88" fill="none" /><path d="M9 3v6M6.500 4.500l5 3M11.500 4.500l-5 3" stroke="#c22" /></svg><Gap $w={7} /><StSep /><Gap $w={28} /><StSep />
            <Gap $w={53} /><Fit w={115}>Moyenne: ; Somme: 0</Fit><Gap $w={51} /><StSep /><Gap $w={9} />
            <svg width="9" height="9"><path d="M0 4.500h9" stroke="#918e8a" strokeWidth="2" /></svg><Gap $w={6} /><Track><Thumb /></Track><Gap $w={6} />
            <svg width="9" height="9"><path d="M0 4.500h9M4.500 0v9" stroke="#918e8a" strokeWidth="2" /></svg><Gap $w={6} /><StSep /><Gap $w={8} /><Fit w={34}>100 %</Fit>
          </Status>
        </Win>
      </Body>
    </Left>
  );
}

/* ================= right monitor ================= */
const Right = styled.div`width: 2560px; height: 1440px; flex: none; display: flex; flex-direction: column; background: #e5e5e5; font-family: ${ui};`;
const TabStrip = styled.div`height: 34px; flex: none; display: flex; align-items: flex-end; padding-left: 10px; background: linear-gradient(#5d5a50, #3f3e39);`;
const Tab = styled.div<{ $on?: boolean; $nosep?: boolean }>`
  width: 140px; height: 34px; flex: none; display: flex; align-items: center; padding: 0 10px 0 10px; border-radius: 8px 8px 0 0;
  background: ${p => (p.$on ? "#f2f1f0" : "transparent")}; color: ${p => (p.$on ? "#4a4a48" : "#d4d1c8")}; font-size: 14px; line-height: 33px;
  border-right: 1px solid transparent; border-image: ${p => (p.$on || p.$nosep ? "none" : "linear-gradient(transparent 7px,#8a877d 7px 27px,transparent 27px) 1")};
`;
const TabText = styled.div<{ $fade: boolean }>`
  width: 78px; margin-left: 8px; overflow: hidden; white-space: nowrap; height: 33px;
  ${p => p.$fade && css`mask-image: linear-gradient(90deg, #000 52px, transparent 78px);`}
`;
const TabX = styled.svg`margin-left: 7px;`;
const AddressRow = styled.div`height: 39px; flex: none; display: flex; align-items: center; background: #f2f1f0; border-bottom: 1px solid #cfcdca; padding-left: 15px;`;
const Omni = styled.div`width: 2344px; height: 30px; border-radius: 15px; background: #fff; display: flex; align-items: center; padding-left: 13px; color: #6a6a6a; font-size: 14.5px; line-height: 29px; b{font-weight:400;color:#2b2b2b}`;
const FigBar = styled.div`height: 48px; flex: none; background: #2c2c2c; display: flex; align-items: center; color: #fff; font: 400 14px/48px ${geo}; padding-left: 14px;`;
const HandBtn = styled.div`width: 40px; height: 48px; background: #18a0fb; display: flex; align-items: center; justify-content: center;`;
const Help = styled.div`width: 24px; height: 24px; border-radius: 12px; background: #f24e1e; color: #2c2c2c; font-size: 12px; line-height: 24px; text-align: center;`;
const Login = styled.div`width: 56px; height: 32px; border: 1px solid #e5e5e5; border-radius: 6px; font-size: 11.5px; line-height: 30px; padding-left: 11px;`;
const Small = styled.div`font-size: 11.5px; color: #c4c4c4;`;
const Canvas = styled.div`flex: 1; display: flex; flex-direction: column; align-items: center; padding-top: 21px;`;
const Banner = styled.div`
  width: 930px; height: 80px; border: 1px solid #c4c4c4; border-radius: 4px; background: #fcfcfc; box-shadow: 0 5px 17px rgba(0,0,0,.2);
  display: flex; align-items: center; padding-left: 20px; font: 400 14px/30px ${geo}; color: #333; b{font-weight:600}
`;
const BtnG = styled.div`width: 161px; height: 36px; border: 1px solid #333; border-radius: 6px; display: flex; align-items: center; padding-left: 11px; font-size: 12px;`;
const BtnE = styled.div`width: 120px; height: 36px; border-radius: 6px; display: flex; align-items: center; padding-left: 12px; background: #1bc47d; color: #fff; font-size: 12px;`;
const Frames = styled.div`width: 2560px; display: flex; gap: 40px; padding: 31px 0 0 155px;`;
const FrameCol = styled.div`width: 1105px;`;
const FrameName = styled.div`height: 15px; font: 400 11px/15px ${geo}; color: #a9a9a9;`;
const Frame = styled.div`width: 1105px; height: 842px; background: #fff; color: #000; font-family: ${geo};`;
const Title = styled.div<{ $pt: number; $pl: number }>`padding: ${p => p.$pt}px 0 0 ${p => p.$pl}px; height: ${p => p.$pt + 56}px; font-size: 46px; line-height: 56px; font-weight: 330;`;
const Columns = styled.div`display: flex;`;
const Col = styled.div<{ $ml: number; $w: number }>`margin-left: ${p => p.$ml}px; width: ${p => p.$w}px;`;
const Heading = styled.div<{ $mt: number; $ml?: number; $w?: number }>`
  margin: ${p => p.$mt}px 0 0 ${p => p.$ml ?? 0}px; ${p => p.$w && `width:${p.$w}px;`} height: 37px; border-bottom: 1px solid #000; font-size: 23px; line-height: 28px; font-weight: 600;
`;
const Txt = styled.div<{ $mt?: number; $ml?: number; $size?: number; $h?: number; $wt?: number }>`
  margin: ${p => p.$mt ?? 0}px 0 0 ${p => p.$ml ?? 0}px; padding-top: 1px; height: ${p => p.$h ?? 28}px; font-size: ${p => p.$size ?? 23}px; line-height: ${p => p.$h ?? 28}px; font-weight: ${p => p.$wt ?? 330};
`;
const Meta = styled.div<{ $mt: number; $ml?: number }>`margin: ${p => p.$mt}px 0 0 ${p => p.$ml ?? 0}px; height: 16px; font-size: 13.5px; line-height: 16px; font-weight: 400; b{font-weight:700}`;
const Para = styled.div<{ $mt: number }>`margin-top: ${p => p.$mt}px; font-size: 15.4px; line-height: 19.9px; font-weight: 350; display: flex; flex-direction: column;`;
const Row = styled.div<{ $mt: number; $gap?: number }>`margin-top: ${p => p.$mt}px; display: flex; gap: ${p => p.$gap ?? 0}px;`;
const Swatch = styled.div<{ $c?: string; $s: number; $ml?: number; $fg?: string; $w?: number }>`
  width: ${p => p.$w ?? p.$s}px; height: ${p => p.$s}px; margin-left: ${p => p.$ml ?? 0}px; border-radius: 14px; background: ${p => p.$c ?? "#c4c4c4"}; color: ${p => p.$fg ?? "#0c0c0c"};
  display: flex; align-items: center; justify-content: center; font-weight: 600; font-size: ${p => (p.$s > 60 ? 23 : 13.5)}px;
`;
const Hex = styled.div<{ $ml?: number; $sm?: boolean }>`margin-left: ${p => p.$ml ?? 0}px; font-size: ${p => (p.$sm ? 11.5 : 13.5)}px; line-height: ${p => (p.$sm ? 14 : 16)}px; height: ${p => (p.$sm ? 14 : 16)}px; font-weight: 600;`;
const Persona = styled.svg`margin: 43px 0 0 96px;`;
const PrimCol = styled.div`width: 198px;`;
const Pill = styled.div<{ $bg: string; $fg: string; $ml: number }>`
  width: 146px; height: 53px; margin-left: ${p => p.$ml}px; border-radius: 27px; background: ${p => p.$bg}; color: ${p => p.$fg}; font-size: 23px; line-height: 51px; padding-left: 26px; font-weight: 400;
`;
const Blurb = styled.div<{ $ml: number }>`margin: 4px 0 0 ${p => p.$ml}px; font-size: 15.4px; line-height: 20px; font-weight: 350; display: flex; flex-direction: column;`;
const LinkT = styled.span<{ $b?: boolean }>`color: #c2185b; font-weight: ${p => (p.$b ? 700 : 350)}; text-decoration: underline; text-decoration-thickness: 1px; text-underline-offset: 2px;`;
const Dot = styled.span`text-decoration: underline; text-decoration-thickness: 1px; text-underline-offset: 2px;`;
const Inline = styled.div`display: flex;`;
const Lead = styled.div`margin-left: -3px;`;
const WinBtns = styled.div`display: flex; gap: 3px; height: 34px; align-items: center;`;

const FigLogo = ({ w, h }: { w: number; h: number }) => (
  <svg width={w} height={h} viewBox="0 0 20 30"><path d="M5 0h5v10H5A5 5 0 0 1 5 0z" fill="#f24e1e" /><path d="M10 0h5a5 5 0 0 1 0 10h-5z" fill="#ff7262" /><path d="M5 10h5v10H5a5 5 0 0 1 0-10z" fill="#a259ff" /><circle cx="15" cy="15" r="5" fill="#1abcfe" /><path d="M5 20h5v5a5 5 0 1 1-5-5z" fill="#0acf83" /></svg>
);
const GoogleG = ({ s }: { s: number }) => (
  <svg width={s} height={s} viewBox="0 0 24 24" fill="none" strokeWidth="4.500"><path d="M19 5.500A9.500 9.500 0 0 0 4 7.500" stroke="#ea4335" /><path d="M4 7.500a9.500 9.500 0 0 0 0 9" stroke="#fbbc05" /><path d="M4 16.500a9.500 9.500 0 0 0 14.500 2.500" stroke="#34a853" /><path d="M18.500 19a9.500 9.500 0 0 0 3-7H12.500" stroke="#4285f4" /></svg>
);
const Fav = styled.div<{ $bg: string; $fg?: string; $r?: number }>`width: 16px; height: 16px; flex: none; border-radius: ${p => p.$r ?? 2}px; background: ${p => p.$bg}; color: ${p => p.$fg ?? "#fff"}; font: 700 10px/16px "Liberation Sans", sans-serif; text-align: center; overflow: hidden;`;
const oc = <svg width="16" height="16" viewBox="0 0 16 16"><rect width="16" height="16" rx="3" fill="#7451eb" /><path d="M4 4c3-2 8-1 8 4s-5 6-8 4c5 0 6-7 0-8z" fill="#fff" /></svg>;
const owl = <svg width="16" height="16" viewBox="0 0 16 16"><path d="M0 0h16v16H0z" fill="#fff" /><path d="M3 2l3 3h4l3-3v7q0 5-5 5T3 9z" fill="#f7c6a5" stroke="#dd6a52" /><circle cx="6" cy="7" r="1.500" fill="#fff" stroke="#d9573f" /><circle cx="10" cy="7" r="1.500" fill="#fff" stroke="#d9573f" /></svg>;
const puzzle = (c: string) => <svg width="16" height="16" viewBox="0 0 24 24"><path d="M20 11h-1.500V7c0-1.100-.9-2-2-2h-4V3.500a2.500 2.500 0 0 0-5 0V5h-4c-1.100 0-2 .9-2 2v3.800H3a2.700 2.700 0 0 1 0 5.400H1.500V20c0 1.100.9 2 2 2h3.800v-1.500a2.700 2.700 0 0 1 5.400 0V22h3.800c1.100 0 2-.9 2-2v-4H20a2.500 2.500 0 0 0 0-5z" fill={c} /></svg>;
const tabs: { t: string; w: number; icon: React.ReactNode; full?: boolean }[] = [
  { t: "Dynamisez", w: 75, icon: oc },
  { t: "Ohmyfood", w: 74, full: true, icon: <svg width="16" height="16" viewBox="0 0 16 16" stroke="#111" strokeWidth="1.600" fill="none"><path d="M1 13V5l3 6V4M7 12V5h2v7M8 14V8l2-5v9l3-8v9M15 3v9" /></svg> },
  { t: "Boîte de ré", w: 74, icon: <svg width="16" height="16" viewBox="0 0 16 16" fill="none" strokeWidth="3"><path d="M2.500 14V4" stroke="#4285f4" /><path d="M13.500 14V4" stroke="#34a853" /><path d="M2 4l6 5 6-5" stroke="#ea4335" /></svg> },
  { t: "Créez des d", w: 77, icon: oc },
  { t: "Modèle de g", w: 79, icon: <FigLogo w={11} h={16} /> },
  { t: "Ready to ch", w: 77, icon: <Fav $bg="#1b1c4d">nu</Fav> },
  { t: "WCAG 2.1 p", w: 77, icon: <svg width="16" height="16" viewBox="0 0 16 16"><path d="M3 3h3v11H3z" fill="#2f9bd8" /><path d="M6 1h3v14H6z" fill="#f4c016" /><path d="M8 1h3l3 3v9l-3 2H8z" fill="#e8541a" /></svg> },
  { t: "Guide+de+t", w: 78, icon: <svg width="16" height="16" viewBox="0 0 16 16"><circle cx="8" cy="8" r="7" fill="#6d7275" /><path d="M4 3l5 1-1 4-3-1zM8 9l4 1-3 4z" fill="#4a4a46" /></svg> },
  { t: "Tester l’acc", w: 76, icon: <svg width="16" height="16" viewBox="0 0 16 16"><rect width="16" height="16" rx="3" fill="#fff" /><path d="M3 12l5-8 5 8M5 12l6-3" stroke="#4a2f6e" strokeWidth="1.800" fill="none" /></svg> },
  { t: "Checklist #", w: 75, icon: <svg width="16" height="16" viewBox="0 0 16 16"><path d="M8 0l8 4-8 4-8-4z" fill="#f6c445" /><path d="M0 4l8 4v8l-8-4z" fill="#58a9e0" /><path d="M16 4L8 8v8l8-4z" fill="#111" /></svg> },
  { t: "Extensions", w: 76, icon: puzzle("#1a73e8") },
  { t: "Extension i", w: 74, icon: <svg width="16" height="16" viewBox="0 0 16 16" fill="none" stroke="#0b84d8" strokeWidth="2"><circle cx="7" cy="10" r="4.500" /><path d="M12 1v10q0 3 1 4" /><circle cx="7" cy="10" r="1.500" /></svg> },
  { t: ".", w: 4, full: true, icon: owl },
  { t: "page2", w: 42, full: true, icon: owl },
  { t: "How to Me", w: 75, icon: <Fav $bg="#fff" $fg="#1c5fa8">W3</Fav> },
  { t: "Lecteur d’é", w: 76, icon: <Fav $bg="#0a75a8" $r={8}>W</Fav> },
  { t: "niveau de c", w: 75, icon: <Fav $bg="#fff" $r={8}><GoogleG s={16} /></Fav> },
];
const FavSlot = styled.div`width: 16px; display: flex; justify-content: center; flex: none;`;
const chevron = <svg width="7" height="5" viewBox="0 0 7 5" fill="none" stroke="#c4c4c4"><path d="M.5 1l3 3 3-3" /></svg>;

const lorem: [string, number][] = [
  ["Lorem ipsum dolor sit amet, consectetur adipiscing", 413], ["elit, sed do eiusmod tempor incididunt ut labore et", 408],
  ["dolore magna aliqua. Ut enim ad minim veniam,", 388], ["quis nostrud exercitation ullamco laboris nisi ut", 378], ["aliquip ex ea commodo consequat.", 281],
];
const secondary: [string, string, number, number, number, number][] = [
  ["#C2185B", "AA", 0, 57, 0, 53], ["#EC407A", "AA", 14, 56, 18, 57], ["#F06292", "AA", 14, 57, 13, 53],
  ["#F48FB1", "AAA", 11, 57, 15, 53], ["#F8BBD0", "AAA", 14, 56, 15, 60], ["#FCE4EC", "AAA", 14, 57, 12, 58],
];
const Spec = ({ mt, w, size, weight }: { mt: number; w: number; size: string; weight: string }) => (
  <Meta $mt={mt}><Fit w={w}><b>font size:</b> {size} | <b>font weight:</b> {weight}</Fit></Meta>
);

function RightScreen() {
  return (
    <Right>
      <TabStrip>
        {tabs.map((t, i) => (
          <Tab key={i} $on={i === 4} $nosep={i === 3}>
            <FavSlot>{t.icon}</FavSlot><TabText $fade={!t.full}><Fit w={t.w}>{t.t}</Fit></TabText>
            <TabX width="9" height="9" viewBox="0 0 9 9"><path d="M1 1l7 7M8 1L1 8" stroke={i === 4 ? "#333" : "#dedbd2"} strokeWidth="1.600" /></TabX>
          </Tab>
        ))}
        <Inline>
          <Gap $w={16} /><svg width="13" height="34"><path d="M6.500 11v12M0.500 17h12" stroke="#e8e5dc" strokeWidth="2" /></svg><Gap $w={66} />
          <svg width="11" height="34"><path d="M1 15l4.500 4.500L10 15" stroke="#e8e5dc" strokeWidth="1.800" fill="none" /></svg><Gap $w={15} />
        </Inline>
        <WinBtns>
          <WBtn $s={13}><svg width="7" height="7"><path d="M0 3.500h7" stroke="#222" /></svg></WBtn>
          <WBtn $s={13}><svg width="7" height="7"><path d="M.5.5h6v6h-6z" stroke="#222" fill="none" /></svg></WBtn>
          <WBtn $s={13} $hot><svg width="7" height="7"><path d="M1 1l5 5M6 1L1 6" stroke="#222" /></svg></WBtn>
        </WinBtns>
      </TabStrip>
      <AddressRow>
        <svg width="14" height="14" viewBox="0 0 14 14" fill="none" stroke="#a3a19e" strokeWidth="1.800"><path d="M14 7H1M7 1L1 7l6 6" /></svg><Gap $w={18} />
        <svg width="14" height="14" viewBox="0 0 14 14" fill="none" stroke="#a3a19e" strokeWidth="1.800"><path d="M0 7h13M7 1l6 6-6 6" /></svg><Gap $w={18} />
        <svg width="14" height="14" viewBox="0 0 14 14" fill="none" stroke="#4a4a4a" strokeWidth="2"><path d="M12 4.500A6 6 0 1 0 13 8.500" /><path d="M13.500 0v6H8z" fill="#4a4a4a" stroke="none" /></svg><Gap $w={15} />
        <Omni>
          <svg width="10" height="13" viewBox="0 0 10 13"><path d="M0 5h10v8H0z" fill="#5a5a5a" /><path d="M2.500 5V3.500a2.500 2.500 0 0 1 5 0V5" stroke="#5a5a5a" strokeWidth="1.500" fill="none" /></svg><Gap $w={11} />
          <Fit w={582}><b>figma.com</b>/file/NGb3JBtTna86rqbfXYePrg/Modèle-de-guide-de-style-rapide?node-id=0%3A1</Fit><Grow />
          <svg width="15" height="13" viewBox="0 0 15 13" fill="#777"><path d="M0 0l15 6.500L0 13V8l8-1.500L0 5z" /></svg><Gap $w={17} />
          <svg width="16" height="16" viewBox="0 0 24 24" fill="none" stroke="#666" strokeWidth="2"><path d="M12 2l3 7 7 .6-5.300 4.800L18.500 22 12 17.800 5.500 22l1.800-7.600L2 9.600 9 9z" /></svg><Gap $w={10} />
        </Omni>
        <Gap $w={13} />{puzzle("#4a4a4a")}<Gap $w={14} />
        <svg width="22" height="22" viewBox="0 0 22 22"><circle cx="11" cy="11" r="11" fill="#2c2c1c" /><path d="M3 3a11 11 0 0 1 14-1l-2 8H6z" fill="#4a5238" /><ellipse cx="12" cy="9" rx="3.500" ry="4.500" fill="#d89a72" /><path d="M7 15l5-2 4 2v6l-7 1z" fill="#15120f" /><path d="M12 13l3 1-1 4-2-1z" fill="#e8b595" /></svg><Gap $w={19} />
        <svg width="4" height="16" fill="#4a4a4a"><circle cx="2" cy="2" r="1.700" /><circle cx="2" cy="7.700" r="1.700" /><circle cx="2" cy="13.400" r="1.700" /></svg>
      </AddressRow>
      <FigBar>
        <svg width="11" height="16" viewBox="0 0 12 17" fill="none" stroke="#ddd" strokeWidth="1.100"><path d="M6 1H3.500a2.500 2.500 0 0 0 0 5H6zM6 1h2.500a2.500 2.500 0 0 1 0 5H6zM6 6H3.500a2.500 2.500 0 0 0 0 5H6zM6 11H3.500A2.500 2.500 0 1 0 6 13.500z" /><circle cx="8.500" cy="8.500" r="2.500" /></svg>
        <Gap $w={8} />{chevron}<Gap $w={11} />
        <HandBtn><svg width="20" height="20" viewBox="0 0 20 20" fill="none" stroke="#fff" strokeWidth="1.200" strokeLinejoin="round"><path d="M6 11V3.500q1.200-1.500 2.300 0V9M8.300 9V2q1.300-1.500 2.500 0v7M10.800 9V2.800q1.200-1.300 2.500 0V10M13.300 10V5q1.200-1.200 2.500 0v7.500q0 6.500-5.500 6.500-3 0-4.500-2.500L2 11.500q-.5-1.500 1-1.800Q4 9.500 6 12.500" /></svg></HandBtn>
        <Gap $w={1108} /><Fit w={210}>Modèle de guide de style rapide</Fit><Gap $w={939} />
        <Help>?</Help><Gap $w={12} /><Login><Fit w={32}>Log in</Fit></Login><Gap $w={28} />
        <svg width="10" height="12" viewBox="0 0 10 12" fill="none" stroke="#ddd" strokeWidth="1.200"><path d="M1 1l8 5-8 5z" /></svg><Gap $w={30} />
        <Small><Fit w={28}>100%</Fit></Small><Gap $w={6} />{chevron}
      </FigBar>
      <Canvas>
        <Banner>
          <FigLogo w={20} h={30} /><Gap $w={31} /><Fit w={131}><b>Welcome to Figma!</b></Fit><Gap $w={4} /><Fit w={351}>Create an account to edit and collaborate on this file.</Fit><Gap $w={59} />
          <BtnG><GoogleG s={14} /><Gap $w={10} /><Fit w={113}>Continue with Google</Fit></BtnG><Gap $w={12} /><BtnE><Fit w={96}>Sign up with email</Fit></BtnE>
        </Banner>
        <Frames>
          <FrameCol>
            <FrameName><Fit w={32}>A4 - 1</Fit></FrameName>
            <Frame>
              <Title $pt={30} $pl={49}><Fit w={603}>Modèle de guide de style</Fit></Title>
              <Columns>
                <Col $ml={47} $w={437}>
                  <Heading $mt={34}><Fit w={156}>Typographie</Fit></Heading>
                  <Txt $mt={35} $ml={4}><Fit w={84}>Titre h1</Fit></Txt>
                  <Txt $mt={43} $ml={4}><Fit w={90}>Titre h2</Fit></Txt>
                  <Txt $mt={43} $ml={4}><Fit w={90}>Titre h3</Fit></Txt>
                  <Txt $mt={44} $ml={3}><Fit w={143}>Paragraphe</Fit></Txt>
                </Col>
                <Col $ml={105} $w={470}>
                  <Heading $mt={34}><Fit w={97}>Couleur</Fit></Heading>
                  <Txt $mt={36} $ml={2}><Fit w={103}>Primaire</Fit></Txt>
                  <Row $mt={11} $gap={22}><Swatch $s={88} /><Swatch $s={88} /><Swatch $s={88} /></Row>
                  <Txt $mt={54} $ml={1}><Fit w={137}>Secondaire</Fit></Txt>
                  <Row $mt={13}>{secondary.map(s => <Swatch key={s[0]} $s={57} $w={s[3]} $ml={s[2]} />)}</Row>
                  <Heading $mt={126}><Fit w={70}>Autre</Fit></Heading>
                </Col>
              </Columns>
            </Frame>
          </FrameCol>
          <FrameCol>
            <FrameName><Fit w={32}>A4 - 2</Fit></FrameName>
            <Frame>
              <Title $pt={34} $pl={41}><Fit w={633}>Exemple de guide de style</Fit></Title>
              <Columns>
                <Col $ml={44} $w={440}>
                  <Heading $mt={30} $ml={3} $w={437}><Lead><Fit w={156}>Typographie</Fit></Lead></Heading>
                  <Meta $mt={11}><Fit w={184}><b>FONT FAMILY:</b> Montserrat</Fit></Meta>
                  <Txt $mt={16} $size={61.5} $h={72} $wt={600}><Fit w={232}>Titre h1</Fit></Txt>
                  <Spec mt={3} w={316} size="64pt/4em" weight="semi-bold" />
                  <Txt $mt={38} $size={46} $h={56} $wt={400}><Fit w={183}>Titre h2</Fit></Txt>
                  <Spec mt={5} w={306} size="48pt/3em" weight="medium" />
                  <Txt $mt={44} $wt={700}><Fit w={95}>Titre h3</Fit></Txt>
                  <Spec mt={11} w={284} size="24pt/1.5em" weight="bold" />
                  <Txt $mt={78}><Fit w={143}>Paragraphe</Fit></Txt>
                  <Spec mt={4} w={289} size="16pt/1em" weight="regular" />
                  <Para $mt={22}>{lorem.map(([t, w]) => <Fit key={w} w={w}>{t}</Fit>)}</Para>
                </Col>
                <Col $ml={105} $w={470}>
                  <Heading $mt={30}><Fit w={97}>Couleur</Fit></Heading>
                  <Inline>
                    <PrimCol>
                      <Txt $mt={36} $ml={2}><Fit w={103}>Primaire</Fit></Txt>
                      <Row $mt={11} $gap={22}><Swatch $s={88} $c="#baf5eb"><Fit w={55}>AAA</Fit></Swatch><Swatch $s={88} $c="#fba9a9"><Fit w={55}>AAA</Fit></Swatch></Row>
                      <Row $mt={13}><Hex $ml={9}><Fit w={68}>#BAF5EB</Fit></Hex><Hex $ml={40}><Fit w={68}>#FBA9A9</Fit></Hex></Row>
                    </PrimCol>
                    <Persona width="160" height="143" viewBox="0 0 160 143"><path d="M0 0h160v143H0z" fill="#7456e8" /><circle cx="79" cy="52" r="26" fill="#fff" /><path d="M26 143a53.500 50 0 0 1 107 0z" fill="#fff" /></Persona>
                  </Inline>
                  <Txt $mt={25} $ml={2}><Fit w={136}>Secondaire</Fit></Txt>
                  <Row $mt={13}>{secondary.map((s, i) => <Swatch key={s[0]} $s={57} $w={s[3]} $ml={s[2]} $c={s[0]} $fg={i ? undefined : "#fff"}><Fit w={s[1].length === 2 ? 21 : 32}>{s[1]}</Fit></Swatch>)}</Row>
                  <Row $mt={10}>{secondary.map(s => <Hex key={s[0]} $sm $ml={s[4]}><Fit w={s[5]}>{s[0]}</Fit></Hex>)}</Row>
                  <Heading $mt={53} $ml={-2} $w={470}><Fit w={224}>Buttons and Links</Fit></Heading>
                  <Meta $mt={15} $ml={1}><b><Fit w={41}>static</Fit></b></Meta>
                  <Row $mt={12}>
                    <Pill $ml={-2} $bg="#c2185b" $fg="#fff"><Fit w={94}>envoyer</Fit></Pill>
                    <Blurb $ml={40}><Fit w={271}>Dites nous ce que vous en pensez</Fit><Inline><Fit w={151}>{"en allant sur notre "}</Fit><Fit w={109}><LinkT>page contact</LinkT><Dot>.</Dot></Fit></Inline></Blurb>
                  </Row>
                  <Meta $mt={21} $ml={-2}><b><Fit w={141}>on hover and focus</Fit></b></Meta>
                  <Row $mt={10}>
                    <Pill $ml={1} $bg="#baf5eb" $fg="#000"><Fit w={94}>envoyer</Fit></Pill>
                    <Blurb $ml={40}><Fit w={271}>Dites nous ce que vous en pensez</Fit><Inline><Fit w={151}>{"en allant sur notre "}</Fit><Fit w={114}><LinkT $b>page contact</LinkT><Dot>.</Dot></Fit></Inline></Blurb>
                  </Row>
                </Col>
              </Columns>
            </Frame>
          </FrameCol>
        </Frames>
      </Canvas>
    </Right>
  );
}

export default function App() {
  return <><Global /><Screen><LeftScreen /><RightScreen /></Screen></>;
}
